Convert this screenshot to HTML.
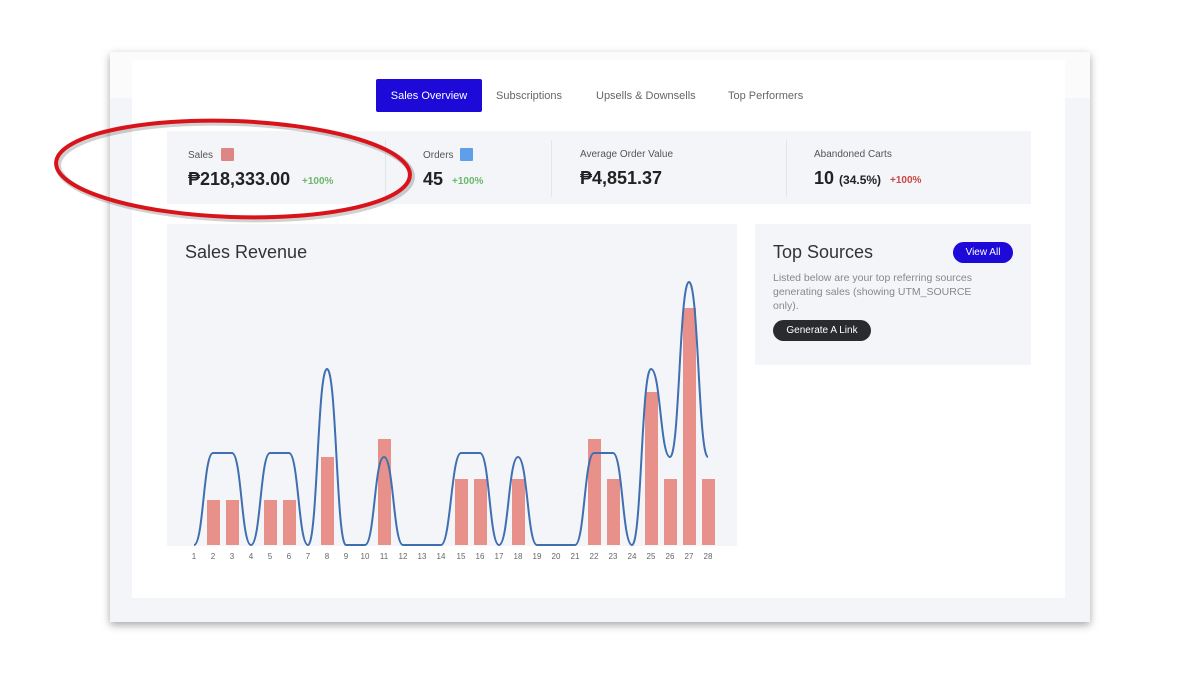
<!DOCTYPE html>
<html><head><meta charset="utf-8"><style>
*{margin:0;padding:0;box-sizing:border-box}
body{width:1200px;height:675px;background:#fff;position:relative;overflow:hidden;font-family:"Liberation Sans",sans-serif;color:#222}
.abs{position:absolute}
.outer{left:110px;top:52px;width:980px;height:570px;background:#f3f5f8;box-shadow:0 3px 8px rgba(0,0,0,.35)}
.topstrip{left:110px;top:52px;width:980px;height:46px;background:#fbfbfc}
.inner{left:132px;top:60px;width:933px;height:538px;background:#fff}
.tab{top:80px;height:33px;line-height:33px;font-size:11px;color:#666}
.stats{left:167px;top:131px;width:864px;height:73px;background:#f3f5f8}
.div{top:140px;width:1px;height:57px;background:#e2e5ea}
.lbl{font-size:10px;color:#555}
.val{font-size:18px;font-weight:bold;color:#222}
.pct{font-size:10px;font-weight:bold}
.panel{background:#f3f5f8}
.ax{top:552px;font-size:8px;color:#666;width:20px;text-align:center}
</style></head><body>
<div class="abs outer"></div>
<div class="abs topstrip"></div>
<div class="abs inner"></div>

<div class="abs" style="left:376px;top:79px;width:106px;height:33px;background:#1d0ad8;border-radius:2px;color:#fff;font-size:11px;line-height:34px;text-align:center">Sales Overview</div>
<div class="abs tab" style="left:496px">Subscriptions</div>
<div class="abs tab" style="left:596px">Upsells &amp; Downsells</div>
<div class="abs tab" style="left:728px">Top Performers</div>

<div class="abs stats"></div>
<div class="abs div" style="left:385px"></div>
<div class="abs div" style="left:551px"></div>
<div class="abs div" style="left:786px"></div>

<div class="abs lbl" style="left:188px;top:150px">Sales</div>
<div class="abs" style="left:221px;top:148px;width:13px;height:13px;background:#e08585;border-radius:1px"></div>
<div class="abs val" style="left:188px;top:169px">₱218,333.00</div>
<div class="abs pct" style="left:302px;top:176px;color:#6bb86b">+100%</div>

<div class="abs lbl" style="left:423px;top:150px">Orders</div>
<div class="abs" style="left:460px;top:148px;width:13px;height:13px;background:#5f9eea;border-radius:1px"></div>
<div class="abs val" style="left:423px;top:169px">45</div>
<div class="abs pct" style="left:452px;top:176px;color:#6bb86b">+100%</div>

<div class="abs lbl" style="left:580px;top:149px">Average Order Value</div>
<div class="abs val" style="left:580px;top:168px">₱4,851.37</div>

<div class="abs lbl" style="left:814px;top:149px">Abandoned Carts</div>
<div class="abs val" style="left:814px;top:168px">10 <span style="font-size:12px">(34.5%)</span></div>
<div class="abs pct" style="left:890px;top:175px;color:#cc4444">+100%</div>

<div class="abs panel" style="left:167px;top:224px;width:570px;height:322px"></div>
<div class="abs" style="left:185px;top:242px;font-size:18px;color:#333">Sales Revenue</div>

<div class="abs panel" style="left:755px;top:224px;width:276px;height:141px"></div>
<div class="abs" style="left:773px;top:242px;font-size:18px;color:#333">Top Sources</div>
<div class="abs" style="left:953px;top:242px;width:60px;height:21px;background:#1d0ad8;border-radius:11px;color:#fff;font-size:10px;line-height:21px;text-align:center">View All</div>
<div class="abs" style="left:773px;top:271px;width:260px;font-size:10.5px;line-height:14px;color:#888;white-space:nowrap">Listed below are your top referring sources<br>generating sales (showing UTM_SOURCE<br>only).</div>
<div class="abs" style="left:773px;top:320px;width:98px;height:21px;background:#2a2b2f;border-radius:11px;color:#fff;font-size:10px;line-height:21px;text-align:center">Generate A Link</div>

<svg class="abs" style="left:0;top:0" width="1200" height="675">
<g fill="#e8908a">
<rect x="207" y="500" width="13" height="45"/><rect x="226" y="500" width="13" height="45"/>
<rect x="264" y="500" width="13" height="45"/><rect x="283" y="500" width="13" height="45"/>
<rect x="321" y="457" width="13" height="88"/><rect x="378" y="439" width="13" height="106"/>
<rect x="455" y="479" width="13" height="66"/><rect x="474" y="479" width="13" height="66"/>
<rect x="512" y="479" width="13" height="66"/><rect x="588" y="439" width="13" height="106"/>
<rect x="607" y="479" width="13" height="66"/><rect x="645" y="392" width="13" height="153"/>
<rect x="664" y="479" width="13" height="66"/><rect x="683" y="308" width="13" height="237"/>
<rect x="702" y="479" width="13" height="66"/>
</g>
<path fill="none" stroke="#3f6fb0" stroke-width="2" d="M194,545 C203.5,545 203.5,453 213,453 S222.5,453 232,453 S241.5,545 251,545 S260.5,453 270,453 S279.5,453 289,453 S298.5,545 308,545 S317.5,369 327,369 S336.5,545 346,545 S355.5,545 365,545 S374.5,457 384,457 S393.5,545 403,545 S412.5,545 422,545 S431.5,545 441,545 S451.5,453 461,453 S470.5,453 480,453 S489.5,545 499,545 S508.5,457 518,457 S527.5,545 537,545 S546.5,545 556,545 S565.5,545 575,545 S584.5,453 594,453 S603.5,453 613,453 S622.5,545 632,545 S641.5,369 651,369 S660.5,457 670,457 S679.5,282 689,282 S698.5,457 708,457"/>
<ellipse cx="235" cy="171" rx="177" ry="48" transform="rotate(2 235 171)" fill="none" stroke="rgba(0,0,0,.18)" stroke-width="6"/>
<ellipse cx="233" cy="169" rx="177" ry="48" transform="rotate(2 233 169)" fill="none" stroke="#d8141a" stroke-width="4"/>
</svg>

<div class="abs ax" style="left:184px">1</div><div class="abs ax" style="left:203px">2</div><div class="abs ax" style="left:222px">3</div><div class="abs ax" style="left:241px">4</div><div class="abs ax" style="left:260px">5</div><div class="abs ax" style="left:279px">6</div><div class="abs ax" style="left:298px">7</div><div class="abs ax" style="left:317px">8</div><div class="abs ax" style="left:336px">9</div><div class="abs ax" style="left:355px">10</div><div class="abs ax" style="left:374px">11</div><div class="abs ax" style="left:393px">12</div><div class="abs ax" style="left:412px">13</div><div class="abs ax" style="left:431px">14</div><div class="abs ax" style="left:451px">15</div><div class="abs ax" style="left:470px">16</div><div class="abs ax" style="left:489px">17</div><div class="abs ax" style="left:508px">18</div><div class="abs ax" style="left:527px">19</div><div class="abs ax" style="left:546px">20</div><div class="abs ax" style="left:565px">21</div><div class="abs ax" style="left:584px">22</div><div class="abs ax" style="left:603px">23</div><div class="abs ax" style="left:622px">24</div><div class="abs ax" style="left:641px">25</div><div class="abs ax" style="left:660px">26</div><div class="abs ax" style="left:679px">27</div><div class="abs ax" style="left:698px">28</div>
</body></html>
